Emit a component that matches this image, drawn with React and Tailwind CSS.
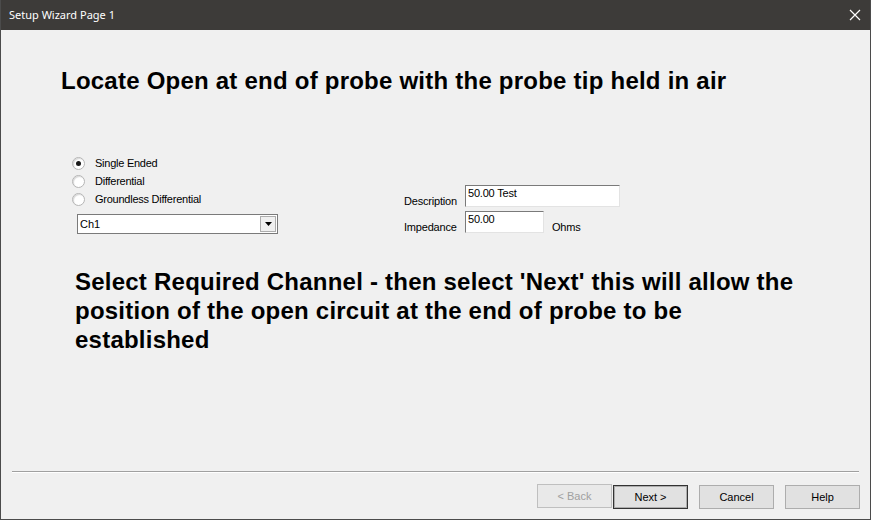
import React, { useState } from 'react';

const Radio = ({ checked, label, onClick }) => (
  <div className="flex items-center h-[18px] cursor-default" onClick={onClick}>
    <div className="w-[13px] h-[13px] rounded-full border border-[#b5b5b5] bg-white flex items-center justify-center shadow-[inset_1px_1px_1px_#d8d8d8]">
      {checked && <div className="w-[5px] h-[5px] rounded-full bg-[#1a1a1a]" />}
    </div>
    <span className="ml-[10px] text-[11px] tracking-[-0.25px] text-black">{label}</span>
  </div>
);

const Button = ({ children, disabled, isDefault }) => (
  <button
    className={
      'w-[75px] h-[24px] text-[11px] bg-[#e1e1e1] border ' +
      (disabled
        ? 'border-[#bfbfbf] text-[#a0a0a0] bg-[#e9e9e9]'
        : isDefault
        ? 'border-[#333] shadow-[inset_0_0_0_1px_#adadad] text-black'
        : 'border-[#adadad] text-black')
    }
  >
    {children}
  </button>
);

const Field = ({ value, onChange, width }) => (
  <input
    value={value}
    onChange={onChange}
    className={
      'h-[22px] bg-white border border-[#7a7a7a] border-b-[#e3e3e3] border-r-[#e3e3e3] px-[2px] text-[11px] tracking-[-0.2px] leading-[13px] pb-[6px] outline-none ' +
      width
    }
  />
);

export default function App() {
  const [mode, setMode] = useState(0);
  const [desc, setDesc] = useState('50.00 Test');
  const [imp, setImp] = useState('50.00');

  return (
    <div className="w-[871px] h-[520px] flex flex-col bg-[#f0f0f0] border-x border-b border-[#4b4b4b] font-['Liberation_Sans',Arial,sans-serif] overflow-hidden">
      {/* title bar */}
      <div className="h-[30px] shrink-0 bg-[#3d3b39] flex items-center justify-between -mx-px">
        <span className="ml-[9px] text-[11px] text-white font-['Noto_Sans',sans-serif]">Setup Wizard Page 1</span>
        <svg width="12" height="12" viewBox="0 0 12 12" className="mr-[10px]">
          <path d="M1 1 L11 11 M11 1 L1 11" stroke="#fff" strokeWidth="1.2" />
        </svg>
      </div>

      <div className="flex-1 flex flex-col">
        <h1 className="mt-[37px] ml-[60px] text-[24px] tracking-[0.23px] font-bold text-black leading-[28px]">
          Locate Open at end of probe with the probe tip held in air
        </h1>

        <div className="flex mt-[59px]">
          <div className="ml-[71px] w-[206px]">
            <Radio checked={mode === 0} label="Single Ended" onClick={() => setMode(0)} />
            <Radio checked={mode === 1} label="Differential" onClick={() => setMode(1)} />
            <Radio checked={mode === 2} label="Groundless Differential" onClick={() => setMode(2)} />
            <div className="mt-[6px] ml-[5px] w-[201px] h-[20px] bg-white border border-[#7a7a7a] flex items-center justify-between">
              <span className="ml-[2px] text-[11px]">Ch1</span>
              <div className="w-[16px] h-[16px] mr-[1px] bg-[#f0f0f0] border border-[#adadad] flex items-center justify-center">
                <svg width="7" height="4" viewBox="0 0 7 4">
                  <path d="M0 0 H7 L3.5 4 Z" fill="#000" />
                </svg>
              </div>
            </div>
          </div>

          <div className="ml-[126px] mt-[31px] flex flex-col gap-[4px]">
            <div className="flex items-end">
              <span className="w-[61px] text-[11px] tracking-[-0.2px] leading-[13px] mb-[-1px]">Description</span>
              <Field value={desc} onChange={e => setDesc(e.target.value)} width="w-[155px]" />
            </div>
            <div className="flex items-end">
              <span className="w-[61px] text-[11px] tracking-[-0.2px] leading-[13px] mb-[-1px]">Impedance</span>
              <Field value={imp} onChange={e => setImp(e.target.value)} width="w-[79px]" />
              <span className="ml-[8px] text-[11px] tracking-[-0.2px] leading-[13px] mb-[-1px]">Ohms</span>
            </div>
          </div>
        </div>

        <p className="mt-[33px] ml-[74px] w-[735px] text-[24px] tracking-[0.23px] font-bold leading-[29px] text-black">
          Select Required Channel - then select 'Next' this will allow the position of the open circuit at the end of probe to be established
        </p>

        <div className="flex-1" />

        <div className="mx-[11px] border-t border-[#a0a0a0] border-b border-b-white" />

        <div className="flex justify-end mt-[11px] mb-[10px] mr-[10px]">
          <Button disabled>&lt; Back</Button>
          <div className="ml-[1px]"><Button isDefault>Next &gt;</Button></div>
          <div className="ml-[11px]"><Button>Cancel</Button></div>
          <div className="ml-[11px]"><Button>Help</Button></div>
        </div>
      </div>
    </div>
  );
}
